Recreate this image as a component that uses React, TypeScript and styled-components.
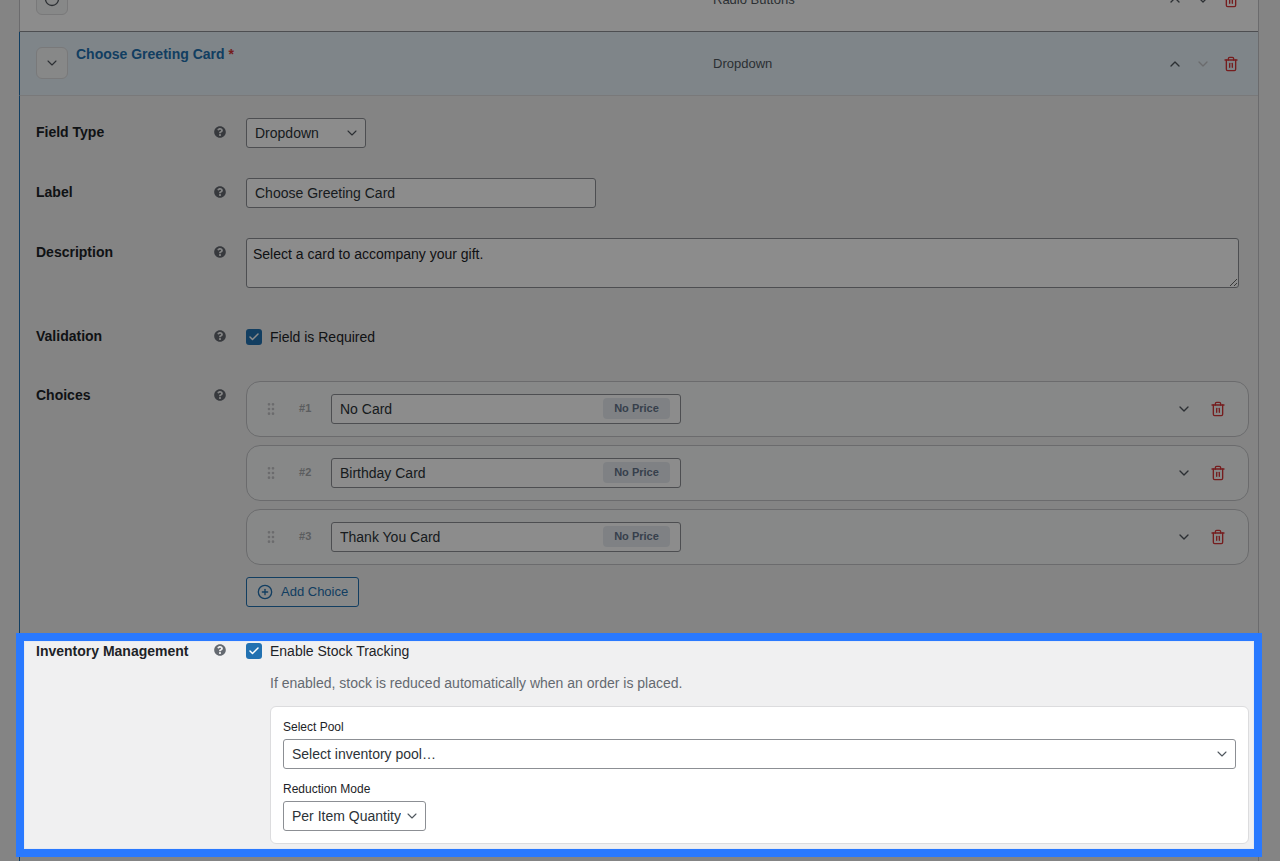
import React from 'react'
import styled, { createGlobalStyle } from 'styled-components'
import { Check, ChevronDown, ChevronUp, CirclePlus, GripVertical, Trash2 } from 'lucide-react'
import { FaQuestionCircle } from 'react-icons/fa'

const CHEVRON =
  "url(\"data:image/svg+xml,%3Csvg xmlns='http://www.w3.org/2000/svg' width='16' height='16' viewBox='0 0 24 24' fill='none' stroke='%2350575e' stroke-width='1.6' stroke-linecap='round' stroke-linejoin='round'%3E%3Cpath d='m6 9 6 6 6-6'/%3E%3C/svg%3E\")"

const GlobalStyle = createGlobalStyle`
  html, body {
    margin: 0;
    height: 100%;
    overflow: hidden;
    background: #f0f0f1;
    font-family: "Liberation Sans", Arial, sans-serif;
    font-size: 14px;
    color: #1d2327;
  }
`

const Viewport = styled.div`
  height: 861px;
  overflow: hidden;
`

const Panel = styled.div`
  margin: -32px 21px 0 19px;
  border-right: 1px solid #c3c4c7;
`

const FieldHeader = styled.div<{ $open?: boolean }>`
  display: grid;
  grid-template-columns: 32px 629px 1fr auto;
  column-gap: 8px;
  align-items: center;
  box-sizing: border-box;
  height: 64px;
  padding: 0 19px 0 16px;
  background: ${(p) => (p.$open ? '#e7f3fa' : '#fff')};
  border-bottom: 1px solid ${(p) => (p.$open ? '#dcdcde' : '#8c8f94')};
  border-left: 1px solid ${(p) => (p.$open ? '#2271b1' : '#c3c4c7')};
`

const ToggleButton = styled.button`
  display: flex;
  align-items: center;
  justify-content: center;
  width: 32px;
  height: 32px;
  margin-top: -2px;
  padding: 0;
  background: #f6f7f7;
  border: 1px solid #dcdcde;
  border-radius: 6px;
  color: #50575e;
`

const FieldTitle = styled.div`
  align-self: start;
  margin-top: 13px;
  font-size: 14px;
  line-height: 18px;
  font-weight: 700;
  color: #2271b1;
`

const Required = styled.span`
  margin-left: 4px;
  color: #d63638;
`

const FieldKind = styled.div`
  font-size: 13px;
  color: #50575e;
`

const HeaderActions = styled.div`
  display: flex;
  align-items: center;
  gap: 12px;
`

const ActionIcon = styled.span<{ $tone?: 'dark' | 'muted' | 'danger' }>`
  display: flex;
  color: ${(p) => (p.$tone === 'danger' ? '#d63638' : p.$tone === 'muted' ? '#c3c4c7' : '#50575e')};
`

const Body = styled.div`
  padding: 22px 4px 0;
  background: #f0f0f1;
  border-left: 1px solid #2271b1;
  height: 800px;
`

const Row = styled.div<{ $top?: number }>`
  display: grid;
  grid-template-columns: 158px 12px 1fr;
  column-gap: 20px;
  align-items: start;
  padding: 0 5px 0 12px;
  margin-top: ${(p) => p.$top ?? 0}px;
`

const RowLabel = styled.div<{ $inline?: boolean }>`
  padding-top: ${(p) => (p.$inline ? 0 : 5)}px;
  font-size: 14px;
  line-height: 18px;
  font-weight: 700;
  color: #1d2327;
`

const Help = styled.div<{ $inline?: boolean }>`
  display: flex;
  padding-top: ${(p) => (p.$inline ? 3 : 8)}px;
  color: #646970;
`

const Spotlight = styled(Row)`
  position: relative;
  z-index: 2;
  background: #f0f0f1;
  padding-bottom: 5px;
  box-shadow:
    inset 0 0 0 1px #e6eaf2,
    0 0 0 8px #2979ff,
    0 0 0 3000px rgba(0, 0, 0, 0.45);

  ${RowLabel} {
    padding-top: 1px;
  }

  ${Help} {
    padding-top: 3px;
  }
`

const Control = styled.div`
  min-width: 0;
`

const Select = styled.select<{ $width?: string }>`
  display: block;
  appearance: none;
  box-sizing: border-box;
  width: ${(p) => p.$width ?? '100%'};
  height: 30px;
  padding: 0 24px 0 8px;
  font: 14px "Liberation Sans", Arial, sans-serif;
  color: #2c3338;
  background: #fff ${CHEVRON} no-repeat right 5px center;
  background-size: 16px 16px;
  border: 1px solid #8c8f94;
  border-radius: 3px;
`

const TextInput = styled.input<{ $width?: string }>`
  display: block;
  box-sizing: border-box;
  width: ${(p) => p.$width ?? '100%'};
  height: 30px;
  padding: 0 8px;
  font: 14px "Liberation Sans", Arial, sans-serif;
  color: #2c3338;
  background: #fff;
  border: 1px solid #8c8f94;
  border-radius: 3px;
`

const TextArea = styled.textarea`
  display: block;
  box-sizing: border-box;
  width: 993px;
  height: 50px;
  padding: 5px 6px;
  font: 14px/20px "Liberation Sans", Arial, sans-serif;
  color: #1d2327;
  background: #fff;
  border: 1px solid #8c8f94;
  border-radius: 3px;
`

const CheckLine = styled.div`
  display: flex;
  align-items: center;
  gap: 8px;
  height: 20px;
  line-height: 20px;
  color: #1d2327;
`

const CheckBox = styled.span`
  display: flex;
  align-items: center;
  justify-content: center;
  width: 16px;
  height: 16px;
  border-radius: 3px;
  background: #2271b1;
  color: #fff;
`

const ChoiceList = styled.div`
  display: flex;
  flex-direction: column;
  gap: 8px;
`

const ChoiceCard = styled.div`
  display: flex;
  align-items: center;
  box-sizing: border-box;
  height: 56px;
  padding: 0 22px 0 16px;
  background: #f6f7f7;
  border: 1px solid #c3c4c7;
  border-radius: 14px;
`

const Grip = styled.span`
  display: flex;
  width: 16px;
  color: #c3c4c7;
`

const ChoiceNumber = styled.span`
  width: 32px;
  margin: -2px 0 0 20px;
  font-size: 11px;
  font-weight: 700;
  color: #a7aaad;
`

const ChoiceInputWrap = styled.div`
  position: relative;
  width: 350px;
`

const PriceBadge = styled.span`
  position: absolute;
  top: 4px;
  right: 11px;
  width: 67px;
  height: 21px;
  line-height: 20px;
  text-align: center;
  font-size: 11px;
  font-weight: 700;
  color: #64748b;
  background: #e8ecf1;
  border-radius: 4px;
`

const ChoiceActions = styled.div`
  display: flex;
  align-items: center;
  gap: 18px;
  margin-left: auto;
`

const AddButton = styled.button`
  display: flex;
  align-items: center;
  gap: 8px;
  box-sizing: border-box;
  height: 30px;
  margin-top: 12px;
  padding: 0 10px 2px;
  font: 13px "Liberation Sans", Arial, sans-serif;
  color: #2271b1;
  background: #f6f7f7;
  border: 1px solid #2271b1;
  border-radius: 3px;

  svg {
    margin-top: 2px;
  }
`

const HelpText = styled.p`
  margin: 12px 0 13px 24px;
  line-height: 20px;
  color: #646970;
`

const StockCard = styled.div`
  margin-left: 24px;
  padding: 12px;
  height: 112px;
  background: #fff;
  border: 1px solid #dcdcde;
  border-radius: 6px;
`

const SmallLabel = styled.div<{ $top?: number }>`
  margin-top: ${(p) => p.$top ?? 0}px;
  margin-bottom: 4px;
  font-size: 12px;
  line-height: 16px;
  color: #1d2327;
`

const choices = ['No Card', 'Birthday Card', 'Thank You Card']

const HelpIcon = ({ inline }: { inline?: boolean }): JSX.Element => (
  <Help $inline={inline}>
    <FaQuestionCircle size={12} />
  </Help>
)

const Checked = ({ children }: { children: React.ReactNode }): JSX.Element => (
  <CheckLine>
    <CheckBox>
      <Check size={12} strokeWidth={3} />
    </CheckBox>
    {children}
  </CheckLine>
)

const HeaderIcons = ({ lastMuted }: { lastMuted?: boolean }): JSX.Element => (
  <HeaderActions>
    <ActionIcon>
      <ChevronUp size={16} />
    </ActionIcon>
    <ActionIcon $tone={lastMuted ? 'muted' : 'dark'}>
      <ChevronDown size={16} />
    </ActionIcon>
    <ActionIcon $tone="danger">
      <Trash2 size={16} />
    </ActionIcon>
  </HeaderActions>
)

const App = (): JSX.Element => {
  return (
    <Viewport>
      <GlobalStyle />
      <Panel>
        <FieldHeader>
          <ToggleButton>
            <svg width="16" height="16" viewBox="0 0 16 16" fill="none" stroke="currentColor" strokeWidth="1.3">
              <circle cx="8" cy="8" r="6.5" />
            </svg>
          </ToggleButton>
          <div />
          <FieldKind>Radio Buttons</FieldKind>
          <HeaderIcons />
        </FieldHeader>
        <FieldHeader $open>
          <ToggleButton>
            <ChevronDown size={16} strokeWidth={1.6} />
          </ToggleButton>
          <FieldTitle>
            Choose Greeting Card<Required>*</Required>
          </FieldTitle>
          <FieldKind>Dropdown</FieldKind>
          <HeaderIcons lastMuted />
        </FieldHeader>
        <Body>
          <Row>
            <RowLabel>Field Type</RowLabel>
            <HelpIcon />
            <Control>
              <Select $width="120px" defaultValue="dropdown">
                <option value="dropdown">Dropdown</option>
              </Select>
            </Control>
          </Row>
          <Row $top={30}>
            <RowLabel>Label</RowLabel>
            <HelpIcon />
            <Control>
              <TextInput $width="350px" defaultValue="Choose Greeting Card" />
            </Control>
          </Row>
          <Row $top={30}>
            <RowLabel>Description</RowLabel>
            <HelpIcon />
            <Control>
              <TextArea defaultValue="Select a card to accompany your gift." />
            </Control>
          </Row>
          <Row $top={39}>
            <RowLabel $inline>Validation</RowLabel>
            <HelpIcon inline />
            <Control>
              <Checked>Field is Required</Checked>
            </Control>
          </Row>
          <Row $top={34}>
            <RowLabel>Choices</RowLabel>
            <HelpIcon />
            <Control>
              <ChoiceList>
                {choices.map((choice, index) => (
                  <ChoiceCard key={choice}>
                    <Grip>
                      <GripVertical size={16} />
                    </Grip>
                    <ChoiceNumber>#{index + 1}</ChoiceNumber>
                    <ChoiceInputWrap>
                      <TextInput defaultValue={choice} />
                      <PriceBadge>No Price</PriceBadge>
                    </ChoiceInputWrap>
                    <ChoiceActions>
                      <ActionIcon>
                        <ChevronDown size={16} />
                      </ActionIcon>
                      <ActionIcon $tone="danger">
                        <Trash2 size={16} />
                      </ActionIcon>
                    </ChoiceActions>
                  </ChoiceCard>
                ))}
              </ChoiceList>
              <AddButton>
                <CirclePlus size={16} />
                Add Choice
              </AddButton>
            </Control>
          </Row>
          <Spotlight $top={34}>
            <RowLabel $inline>Inventory Management</RowLabel>
            <HelpIcon inline />
            <Control>
              <Checked>Enable Stock Tracking</Checked>
              <HelpText>If enabled, stock is reduced automatically when an order is placed.</HelpText>
              <StockCard>
                <SmallLabel>Select Pool</SmallLabel>
                <Select defaultValue="">
                  <option value="">Select inventory pool…</option>
                </Select>
                <SmallLabel $top={12}>Reduction Mode</SmallLabel>
                <Select $width="143px" defaultValue="item">
                  <option value="item">Per Item Quantity</option>
                </Select>
              </StockCard>
            </Control>
          </Spotlight>
        </Body>
      </Panel>
    </Viewport>
  )
}

export default App
